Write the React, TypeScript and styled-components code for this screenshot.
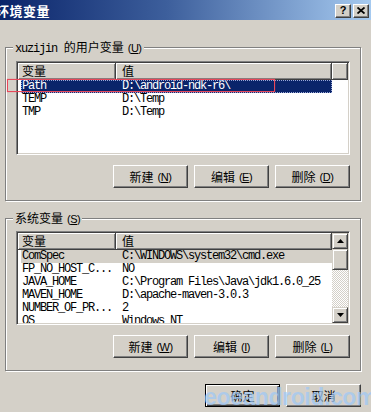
import React from 'react';
import styled, { createGlobalStyle } from 'styled-components';

const GlobalStyle = createGlobalStyle`
	html,
	body {
		margin: 0;
		padding: 0;
		background: #d4d0c8;
		overflow: hidden;
	}
	body {
		font-family: 'Noto Sans CJK SC', 'Liberation Sans', sans-serif;
		font-size: 12px;
		color: #000;
	}
	* {
		box-sizing: border-box;
	}
`;

type Row = { name: string; value: string };

const userVars: Row[] = [
	{ name: 'Path', value: 'D:\\android-ndk-r6\\' },
	{ name: 'TEMP', value: 'D:\\Temp' },
	{ name: 'TMP', value: 'D:\\Temp' },
];

const systemVars: Row[] = [
	{ name: 'ComSpec', value: 'C:\\WINDOWS\\system32\\cmd.exe' },
	{ name: 'FP_NO_HOST_C...', value: 'NO' },
	{ name: 'JAVA_HOME', value: 'C:\\Program Files\\Java\\jdk1.6.0_25' },
	{ name: 'MAVEN_HOME', value: 'D:\\apache-maven-3.0.3' },
	{ name: 'NUMBER_OF_PR...', value: '2' },
	{ name: 'OS', value: 'Windows_NT' },
];

const Arrow = ({ up }: { up?: boolean }) => (
	<svg width='7' height='4' viewBox='0 0 7 4'>
		{up ? (
			<polygon points='3.5,0 7,4 0,4' fill='#000' />
		) : (
			<polygon points='0,0 7,0 3.5,4' fill='#000' />
		)}
	</svg>
);

const VarList = ({
	rows,
	selected,
	active,
	scroll,
}: {
	rows: Row[];
	selected: number;
	active?: boolean;
	scroll?: boolean;
}) => (
	<StyledList>
		<StyledListBody>
			<StyledHeader>
				<StyledHeadCell $w={98} $pad={4}>
					变量
				</StyledHeadCell>
				<StyledHeadCell $w={216} $pad={6}>
					值
				</StyledHeadCell>
				{!scroll && <StyledHeadCell $w={0} $pad={0} />}
			</StyledHeader>
			{rows.map((r, i) => (
				<StyledRow
					key={r.name}
					$sel={i === selected}
					$active={!!active}
				>
					<StyledName>{r.name}</StyledName>
					<StyledValue>{r.value}</StyledValue>
				</StyledRow>
			))}
		</StyledListBody>
		{scroll && (
			<StyledScrollbar>
				<StyledScrollBtn>
					<Arrow up />
				</StyledScrollBtn>
				<StyledThumb />
				<StyledTrack />
				<StyledScrollBtn>
					<Arrow />
				</StyledScrollBtn>
			</StyledScrollbar>
		)}
	</StyledList>
);

const Btn = ({
	text,
	hot,
	isDefault,
}: {
	text: string;
	hot?: string;
	isDefault?: boolean;
}) => (
	<StyledButton $default={!!isDefault}>
		{text}
		{hot && (
			<StyledHot>
				(<u>{hot}</u>)
			</StyledHot>
		)}
	</StyledButton>
);

const App = () => {
	return (
		<>
			<GlobalStyle />
			<StyledWindow>
				<StyledTitleBar>
					<StyledTitle>环境变量</StyledTitle>
					<StyledCaptionBtns>
						<StyledCaptionBtn>?</StyledCaptionBtn>
						<StyledCaptionBtn>
							<svg width='8' height='7' viewBox='0 0 8 7'>
								<path
									d='M0.5 0.5 L7.5 6.5 M7.5 0.5 L0.5 6.5'
									stroke='#000'
									strokeWidth='1.8'
								/>
							</svg>
						</StyledCaptionBtn>
					</StyledCaptionBtns>
				</StyledTitleBar>
				<StyledBody>
					<StyledGroup $top={27}>
						<StyledLegend $gap={7}>
							<StyledMono>xuzijin</StyledMono> 的用户变量
							<StyledHot>
								(<u>U</u>)
							</StyledHot>
						</StyledLegend>
						<VarList rows={userVars} selected={0} active />
						<StyledButtonRow>
							<Btn text='新建' hot='N' />
							<Btn text='编辑' hot='E' />
							<Btn text='删除' hot='D' />
						</StyledButtonRow>
					</StyledGroup>
					<StyledGroup $top={17}>
						<StyledLegend $gap={6}>
							系统变量
							<StyledHot>
								(<u>S</u>)
							</StyledHot>
						</StyledLegend>
						<VarList rows={systemVars} selected={0} scroll />
						<StyledButtonRow>
							<Btn text='新建' hot='W' />
							<Btn text='编辑' hot='I' />
							<Btn text='删除' hot='L' />
						</StyledButtonRow>
					</StyledGroup>
					<StyledFooter>
						<Btn text='确定' isDefault />
						<Btn text='取消' />
					</StyledFooter>
				</StyledBody>
				<StyledMark />
				<StyledWatermark>eoeandroid.com</StyledWatermark>
			</StyledWindow>
		</>
	);
};

export default App;

const StyledWindow = styled.div`
	position: relative;
	width: 371px;
	height: 412px;
	overflow: hidden;
	background: #d4d0c8;
	display: flex;
	flex-direction: column;
`;

const StyledTitleBar = styled.div`
	flex: none;
	height: 20px;
	display: flex;
	align-items: center;
	justify-content: space-between;
	padding-right: 2px;
	background: linear-gradient(to right, #0a246a 0%, #3d5f9c 45%, #a6caf0 100%);
`;

const StyledTitle = styled.div`
	margin-left: -4px;
	color: #fff;
	font-weight: bold;
	font-size: 13px;
	letter-spacing: 0.5px;
`;

const StyledCaptionBtns = styled.div`
	display: flex;
	gap: 2px;
	margin-top: 1px;
`;

const StyledCaptionBtn = styled.div`
	width: 16px;
	height: 14px;
	display: flex;
	align-items: center;
	justify-content: center;
	background: #d4d0c8;
	border: 1px solid;
	border-color: #fff #404040 #404040 #fff;
	box-shadow: inset -1px -1px #808080;
	font-family: 'Liberation Sans', sans-serif;
	font-weight: bold;
	font-size: 11px;
	line-height: 1;
`;

const StyledBody = styled.div`
	flex: 1;
	display: flex;
	flex-direction: column;
	padding: 0 10px 0 5px;
`;

const StyledGroup = styled.div<{ $top: number }>`
	margin-top: ${(p) => p.$top}px;
	display: flex;
	flex-direction: column;
	padding: 0 10px 12px;
	border: 1px solid #808080;
	box-shadow: 1px 1px 0 #fff, inset 1px 1px 0 #fff;
`;

const StyledLegend = styled.div<{ $gap: number }>`
	align-self: flex-start;
	height: 14px;
	margin: -8px 0 ${(p) => p.$gap}px -3px;
	padding: 0 2px;
	background: #d4d0c8;
	font-size: 12px;
	line-height: 14px;
	white-space: nowrap;
`;

const StyledMono = styled.span`
	font-family: 'Liberation Mono', monospace;
	font-size: 12px;
	letter-spacing: -1.2px;
	margin-right: 4px;
`;

const StyledHot = styled.span`
	margin-left: 4px;
	font-family: 'Liberation Sans', sans-serif;
	font-size: 11px;
	letter-spacing: -0.5px;
`;

const StyledList = styled.div`
	height: 94px;
	display: flex;
	padding: 1px;
	background: #fff;
	border: 1px solid;
	border-color: #808080 #fff #fff #808080;
	box-shadow: inset 1px 1px #404040, inset -1px -1px #d4d0c8;
	overflow: hidden;
`;

const StyledListBody = styled.div`
	flex: 1;
	min-width: 0;
	display: flex;
	flex-direction: column;
	overflow: hidden;
`;

const StyledHeader = styled.div`
	flex: none;
	height: 17px;
	display: flex;
`;

const StyledHeadCell = styled.div<{ $w: number; $pad: number }>`
	${(p) => (p.$w ? `width: ${p.$w}px; flex: none;` : 'flex: 1;')}
	padding-left: ${(p) => p.$pad}px;
	background: #d4d0c8;
	border-right: 1px solid #404040;
	border-bottom: 1px solid #404040;
	box-shadow: inset 1px 1px #fff, inset -1px -1px #808080;
	font-size: 12px;
	line-height: 15px;
`;

const StyledRow = styled.div<{ $sel: boolean; $active: boolean }>`
	flex: none;
	height: 13px;
	width: 311px;
	margin-left: 3px;
	display: flex;
	font-family: 'Liberation Mono', monospace;
	font-size: 12px;
	letter-spacing: -1.2px;
	line-height: 13px;
	white-space: nowrap;
	background: ${(p) => (p.$sel ? (p.$active ? '#0a246a' : '#d4d0c8') : 'transparent')};
	color: ${(p) => (p.$sel && p.$active ? '#fff' : '#000')};
	outline: ${(p) => (p.$sel && p.$active ? '1px dotted #9aa8d8' : 'none')};
	outline-offset: -1px;
`;

const StyledName = styled.div`
	width: 95px;
	flex: none;
	padding-left: 1px;
	overflow: hidden;
`;

const StyledValue = styled.div`
	flex: 1;
	padding-left: 6px;
	overflow: hidden;
`;

const StyledScrollbar = styled.div`
	flex: none;
	width: 16px;
	display: flex;
	flex-direction: column;
`;

const raised = `
	background: #d4d0c8;
	border: 1px solid;
	border-color: #d4d0c8 #404040 #404040 #d4d0c8;
	box-shadow: inset 1px 1px #fff, inset -1px -1px #808080;
`;

const StyledScrollBtn = styled.div`
	${raised}
	flex: none;
	height: 16px;
	display: flex;
	align-items: center;
	justify-content: center;
`;

const StyledThumb = styled.div`
	${raised}
	flex: none;
	height: 21px;
`;

const StyledTrack = styled.div`
	flex: 1;
	background: repeating-conic-gradient(#fff 0 25%, #d4d0c8 0 50%) 0 0 / 2px 2px;
`;

const StyledButtonRow = styled.div`
	display: flex;
	justify-content: flex-end;
	gap: 6px;
	margin-top: 10px;
`;

const StyledButton = styled.div<{ $default: boolean }>`
	width: 75px;
	height: 23px;
	display: flex;
	align-items: center;
	justify-content: center;
	background: #d4d0c8;
	border: 1px solid;
	border-color: ${(p) => (p.$default ? '#000' : '#fff #404040 #404040 #fff')};
	box-shadow: ${(p) =>
		p.$default
			? 'inset 1px 1px #fff, inset -1px -1px #404040, inset -2px -2px #808080'
			: 'inset -1px -1px #808080'};
	font-size: 12px;
	white-space: nowrap;
`;

const StyledFooter = styled.div`
	display: flex;
	justify-content: flex-end;
	gap: 6px;
	margin-top: 13px;
`;

const StyledMark = styled.div`
	position: absolute;
	left: 7px;
	top: 79px;
	width: 268px;
	height: 13px;
	border: 1px solid #e8485a;
	box-shadow: 0 0 1px rgba(232, 72, 90, 0.7);
	pointer-events: none;
`;

const StyledWatermark = styled.div`
	position: absolute;
	left: 204px;
	top: 384px;
	font-family: 'Liberation Sans', sans-serif;
	font-weight: bold;
	font-size: 23px;
	letter-spacing: -0.4px;
	color: rgba(160, 200, 245, 0.75);
	pointer-events: none;
`;
